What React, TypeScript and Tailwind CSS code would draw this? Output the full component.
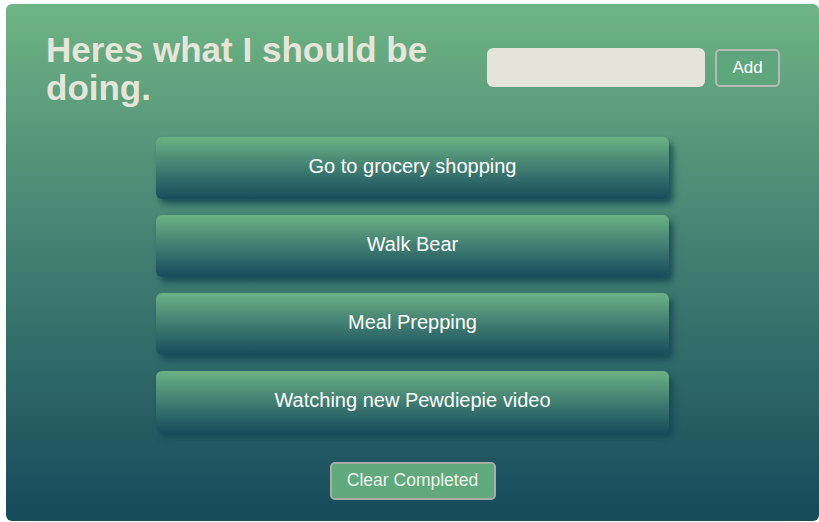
import React, { useState } from 'react';

const initialTodos = [
    'Go to grocery shopping',
    'Walk Bear',
    'Meal Prepping',
    'Watching new Pewdiepie video',
];

const App: React.FC = () => {
    const [todos] = useState<string[]>(initialTodos);
    const [draft, setDraft] = useState('');

    return (
        <div className="min-h-screen bg-white pl-[6px] pt-[4px] font-['Liberation_Sans',Arial,sans-serif]">
            <div className="h-[517px] w-[813px] rounded-[6px] bg-gradient-to-b from-[#6fb484] to-[#154a5b] pb-[20px]">
                <div className="flex items-start justify-between pl-[40px] pr-[39px] pt-[27px]">
                    <h1 className="w-[420px] text-[35px] font-bold leading-[38px] text-[#e6e5d9]">
                        Heres what I should be doing.
                    </h1>
                    <div className="mt-[17px] flex items-center gap-[10px]">
                        <input
                            value={draft}
                            onChange={e => setDraft(e.target.value)}
                            className="h-[39px] w-[218px] rounded-[6px] bg-[#e4e4da] px-3 text-base outline-none"
                        />
                        <button className="h-[38px] w-[65px] rounded-[5px] border-2 border-[#b7b9b3] bg-[#5ea67b] text-[17px] text-white">
                            Add
                        </button>
                    </div>
                </div>

                <ul className="mx-auto mt-[30px] flex w-[513px] flex-col gap-[16px]">
                    {todos.map(todo => (
                        <li
                            key={todo}
                            className="flex h-[62px] items-center justify-center rounded-[6px] bg-gradient-to-b from-[#6cb284] to-[#174c5c] pb-[4px] text-[20px] text-white shadow-[4px_5px_6px_rgba(20,70,85,0.85)]"
                        >
                            {todo}
                        </li>
                    ))}
                </ul>

                <div className="mt-[29px] flex justify-center">
                    <button className="h-[38px] w-[166px] rounded-[5px] border-2 border-[#a9aca6] bg-[#5fa97d] pb-[2px] text-[17.5px] text-[#eef3ea]">
                        Clear Completed
                    </button>
                </div>
            </div>
        </div>
    );
};

export default App;
